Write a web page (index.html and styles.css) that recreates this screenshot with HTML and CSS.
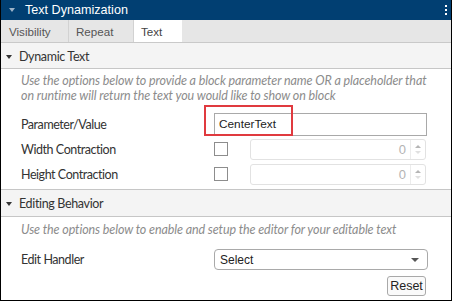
FILE: index.html
```html
<!DOCTYPE html>
<html>
<head>
<meta charset="utf-8">
<link rel="stylesheet" href="styles.css">
</head>
<body>
<div class="panel">
  <div class="titlebar">
    <span class="tri-light"></span>
    <span class="title">Text Dynamization</span>
    <span class="dots"><i></i><i></i><i></i></span>
  </div>
  <div class="tabs">
    <div class="tab tab-vis">Visibility</div>
    <div class="tab tab-rep">Repeat</div>
    <div class="tab tab-text active">Text</div>
  </div>
  <div class="section">
    <div class="sec-head"><span class="tri-dark"></span>Dynamic Text</div>
    <div class="sec-body">
      <p class="desc">Use the options below to provide a block parameter name OR a placeholder that on runtime will return the text you would like to show on block</p>
      <div class="row row-param">
        <span class="label">Parameter/Value</span>
        <div class="textbox">CenterText</div>
        <div class="highlight"></div>
      </div>
      <div class="row row-spin">
        <span class="label">Width Contraction</span>
        <span class="check"></span>
        <div class="spin"><span class="num">0</span><span class="arrows"><svg width="10" height="16" viewBox="0 0 10 16"><path d="M2 7 L5 4 L8 7 Z" fill="#b5b5b5"/><path d="M2 10 L5 13 L8 10 Z" fill="#e0e0e0"/></svg></span></div>
      </div>
      <div class="row row-spin">
        <span class="label">Height Contraction</span>
        <span class="check"></span>
        <div class="spin"><span class="num">0</span><span class="arrows"><svg width="10" height="16" viewBox="0 0 10 16"><path d="M2 7 L5 4 L8 7 Z" fill="#b5b5b5"/><path d="M2 10 L5 13 L8 10 Z" fill="#e0e0e0"/></svg></span></div>
      </div>
    </div>
  </div>
  <div class="section">
    <div class="sec-head sec-head2"><span class="tri-dark"></span>Editing Behavior</div>
    <div class="sec-body sec-body2">
      <p class="desc">Use the options below to enable and setup the editor for your editable text</p>
      <div class="row row-edit">
        <span class="label">Edit Handler</span>
        <div class="select">Select<span class="sel-arrow"></span></div>
      </div>
      <div class="btnrow"><div class="btn">Reset</div></div>
    </div>
  </div>
</div>
</body>
</html>
```

FILE: styles.css
```css
html, body { margin: 0; padding: 0; background: #fff; }
.panel {
  width: 452px; height: 301px; box-sizing: border-box;
  border: 1px solid #000; border-top: none;
  overflow: hidden; background: #fff;
  font-family: Lato, "Open Sans", sans-serif;
}
.titlebar {
  height: 20px; background: #013f72; color: #fff;
  display: flex; align-items: center; position: relative;
  font-family: "Liberation Sans", Arial, sans-serif; font-size: 12.6px;
}
.tri-light {
  width: 0; height: 0; margin-left: 8px; margin-right: 10px;
  border-left: 3.5px solid transparent; border-right: 3.5px solid transparent;
  border-top: 4px solid #9db3c8;
}
.dots { margin-left: auto; margin-right: 4px; display: flex; flex-direction: column; gap: 2px; }
.dots i { display: block; width: 2px; height: 2px; background: #fff; }
.tabs {
  height: 22px; background: #e6e6e6; display: flex;
  border-bottom: 1px solid #c9c9c9;
  font-family: "Liberation Sans", Arial, sans-serif; font-size: 11.6px; color: #555;
}
.tab { display: flex; align-items: center; box-sizing: border-box; border-right: 1px solid #d2d2d2; padding-left: 8px; }
.tab-vis { width: 68px; }
.tab-rep { width: 65px; padding-left: 7px; }
.tab-text { width: 48px; padding-left: 7px; }
.tab.active { background: #fff; color: #444; border-right: none; }
.sec-head {
  height: 26px; box-sizing: border-box; background: #f4f4f4;
  border-bottom: 1px solid #c6c6c6;
  display: flex; align-items: center; padding-top: 2px;
  font-size: 12.5px; letter-spacing: -0.35px; color: #333;
}
.sec-head2 { height: 28px; border-top: 1px solid #c6c6c6; padding-top: 1px; }
.tri-dark {
  width: 0; height: 0; margin-left: 5px; margin-right: 7px;
  border-left: 3.5px solid transparent; border-right: 3.5px solid transparent;
  border-top: 4px solid #333;
}
.sec-body { height: 120px; padding: 5px 0 0 20px; box-sizing: border-box; }
.sec-body2 { height: 83px; padding-top: 6px; }
.desc {
  margin: 0; font-style: italic; color: #8c8c8c; font-size: 12.5px; line-height: 14.5px;
  letter-spacing: -0.1px; width: 420px;
}
.row { display: flex; align-items: center; height: 24px; position: relative; }
.row-param { margin-top: 9px; }
.row-spin { margin-top: 1px; }
.label { width: 193px; font-size: 12.5px; letter-spacing: -0.45px; color: #333; }
.textbox {
  width: 213px; height: 23px; box-sizing: border-box; border: 1px solid #a9a9a9;
  font-family: "Liberation Sans", Arial, sans-serif; font-size: 11.8px; color: #222;
  display: flex; align-items: center; padding-left: 4px;
}
.highlight {
  position: absolute; left: 183px; top: -7px; width: 89px; height: 31px;
  box-sizing: border-box; border: 2px solid #e03a3f;
}
.check {
  width: 14px; height: 14px; box-sizing: border-box; border: 1px solid #8d8d8d;
  background: #fff; margin-right: 22px;
}
.spin {
  width: 176px; height: 21px; box-sizing: border-box; border: 1px solid #e2e2e2; border-radius: 3px;
  display: flex; align-items: center; justify-content: flex-end;
  font-family: "Liberation Sans", Arial, sans-serif; font-size: 13px; color: #b3b3b3;
}
.num { margin-right: 4px; }
.arrows { width: 14px; height: 19px; border-left: 1px solid #ececec; display: flex; align-items: center; justify-content: center; }
.row-edit { margin-top: 10px; }
.select {
  width: 214px; height: 21px; box-sizing: border-box; border: 1px solid #a9a9a9; border-radius: 4px;
  background: #fff; display: flex; align-items: center; padding-left: 5px; position: relative;
  font-family: "Liberation Sans", Arial, sans-serif; font-size: 12px; color: #222;
}
.sel-arrow {
  position: absolute; right: 8px; top: 8px; width: 0; height: 0;
  border-left: 4px solid transparent; border-right: 4px solid transparent; border-top: 4px solid #555;
}
.btnrow { display: flex; justify-content: flex-end; padding-right: 25px; margin-top: 4px; }
.btn {
  width: 39px; height: 20px; box-sizing: border-box; border: 1px solid #a9a9a9; border-radius: 3px;
  display: flex; align-items: center; justify-content: center;
  font-family: "Liberation Sans", Arial, sans-serif; font-size: 12.5px; color: #222; background: #fafafa;
}
```
